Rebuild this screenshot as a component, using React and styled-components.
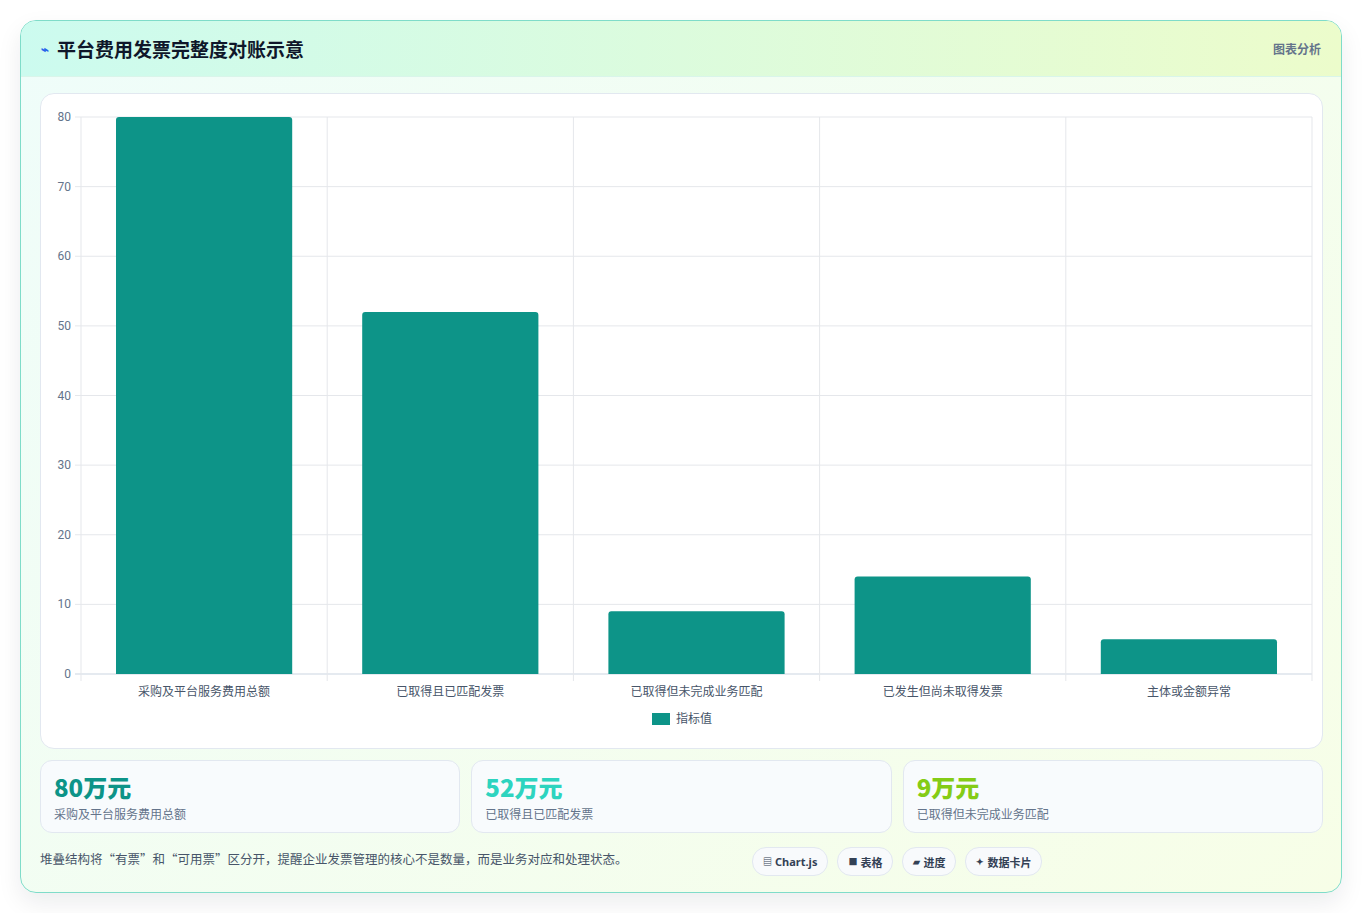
import React from "react";
import styled, { createGlobalStyle } from "styled-components";

const Global = createGlobalStyle`
  body { margin: 0; background: #fff; font-family: "Noto Sans CJK SC", "Noto Sans", sans-serif; }
`;

const data = [
  { label: "采购及平台服务费用总额", value: 80 },
  { label: "已取得且已匹配发票", value: 52 },
  { label: "已取得但未完成业务匹配", value: 9 },
  { label: "已发生但尚未取得发票", value: 14 },
  { label: "主体或金额异常", value: 5 },
];

const stats = [
  { value: "80万元", label: "采购及平台服务费用总额", color: "#0d9488" },
  { value: "52万元", label: "已取得且已匹配发票", color: "#2dd4bf" },
  { value: "9万元", label: "已取得但未完成业务匹配", color: "#84cc16" },
];

const chips = [
  { icon: "▤", text: "Chart.js" },
  { icon: "■", text: "表格" },
  { icon: "▰", text: "进度" },
  { icon: "✦", text: "数据卡片" },
];

function Chart() {
  const W = 1283, H = 654;
  const left = 40, right = 1271, top = 23, bottom = 580;
  const colW = (right - left) / data.length;
  const y = (v) => bottom - ((bottom - top) * v) / 80;
  const ticks = [0, 10, 20, 30, 40, 50, 60, 70, 80];
  return (
    <svg width={W} height={H} viewBox={`0 0 ${W} ${H}`}>
      {ticks.map((t) => (
        <g key={t}>
          <line x1={left - 6} x2={right} y1={y(t)} y2={y(t)} stroke={t === 0 ? "#cbd5e1" : "#e5e7eb"} />
          <text x={left - 10} y={y(t) + 4} textAnchor="end" fontSize="12" fill="#64748b" fontFamily="Roboto, sans-serif">{t}</text>
        </g>
      ))}
      {data.map((d, i) => (
        <line key={i} x1={left + colW * i} x2={left + colW * i} y1={top} y2={bottom + 7} stroke="#e5e7eb" />
      ))}
      <line x1={right} x2={right} y1={top} y2={bottom + 7} stroke="#e5e7eb" />
      {data.map((d, i) => {
        const bx = left + colW * i + 35;
        const bw = colW - 70;
        const by = y(d.value);
        return (
          <g key={d.label}>
            <path d={`M${bx} ${bottom} V${by + 3} Q${bx} ${by} ${bx + 3} ${by} H${bx + bw - 3} Q${bx + bw} ${by} ${bx + bw} ${by + 3} V${bottom} Z`} fill="#0d9488" />
            <text x={left + colW * i + colW / 2} y={bottom + 22} textAnchor="middle" fontSize="12" fill="#475569">{d.label}</text>
          </g>
        );
      })}
      <rect x={611} y={619} width={18} height={12} fill="#0d9488" />
      <text x={635} y={629} fontSize="12" fill="#475569">指标值</text>
    </svg>
  );
}

export default function App() {
  return (
    <>
      <Global />
      <Page>
        <Card>
          <Header>
            <Title>
              <Bolt>⌁</Bolt>
              平台费用发票完整度对账示意
            </Title>
            <Tag>图表分析</Tag>
          </Header>
          <Body>
            <ChartBox>
              <Chart />
            </ChartBox>
            <Stats>
              {stats.map((s) => (
                <Stat key={s.label}>
                  <StatValue color={s.color}>{s.value}</StatValue>
                  <StatLabel>{s.label}</StatLabel>
                </Stat>
              ))}
            </Stats>
            <Footer>
              <Note>堆叠结构将“有票”和“可用票”区分开，提醒企业发票管理的核心不是数量，而是业务对应和处理状态。</Note>
              <Chips>
                {chips.map((c) => (
                  <Chip key={c.text}>
                    <ChipIcon>{c.icon}</ChipIcon>
                    {c.text}
                  </Chip>
                ))}
              </Chips>
            </Footer>
          </Body>
        </Card>
      </Page>
    </>
  );
}

const Page = styled.div`
  padding: 20px 21px 22px 20px;
`;

const Card = styled.div`
  border: 1px solid #7fdcc9;
  border-radius: 16px;
  overflow: hidden;
  box-shadow: 0 10px 24px rgba(15, 23, 42, 0.08);
  background: linear-gradient(135deg, #effdfa 0%, #f7fee7 100%);
`;

const Header = styled.div`
  height: 55px;
  display: flex;
  align-items: center;
  justify-content: space-between;
  padding: 0 20px;
  background: linear-gradient(90deg, #ccfbef 0%, #ecfccb 100%);
  border-bottom: 1px solid #d9f5ea;
`;

const Title = styled.h1`
  margin: 0;
  display: flex;
  align-items: center;
  gap: 8px;
  font-size: 19px;
  font-weight: 700;
  color: #0f172a;
`;

const Bolt = styled.span`
  color: #2563eb;
  font-size: 13px;
`;

const Tag = styled.span`
  font-size: 12px;
  font-weight: 700;
  color: #64748b;
`;

const Body = styled.div`
  padding: 16px 18px 16px 19px;
`;

const ChartBox = styled.div`
  height: 654px;
  background: #fff;
  border: 1px solid #e2e8f0;
  border-radius: 14px;
  overflow: hidden;
`;

const Stats = styled.div`
  display: grid;
  grid-template-columns: repeat(3, 1fr);
  gap: 11px;
  margin-top: 11px;
`;

const Stat = styled.div`
  height: 73px;
  box-sizing: border-box;
  padding: 10px 13px;
  background: #f8fbfd;
  border: 1px solid #e2e8f0;
  border-radius: 12px;
`;

const StatValue = styled.div`
  font-size: 24px;
  font-weight: 800;
  line-height: 32px;
  color: ${(p) => p.color};
`;

const StatLabel = styled.div`
  font-size: 12px;
  color: #64748b;
  margin-top: 2px;
`;

const Footer = styled.div`
  display: grid;
  grid-template-columns: 712px auto;
  align-items: center;
  margin-top: 14px;
`;

const Note = styled.div`
  font-size: 12.5px;
  color: #475569;
  margin-top: -6px;
`;

const Chips = styled.div`
  display: flex;
  gap: 9px;
`;

const Chip = styled.span`
  display: inline-flex;
  align-items: center;
  gap: 3px;
  height: 27px;
  padding: 0 10px;
  border: 1px solid #e2e8f0;
  border-radius: 14px;
  background: #f8fafc;
  font-size: 11px;
  font-weight: 700;
  color: #334155;
  font-family: "Noto Sans", "Noto Sans CJK SC", sans-serif;
`;

const ChipIcon = styled.span`
  font-size: 9px;
`;
